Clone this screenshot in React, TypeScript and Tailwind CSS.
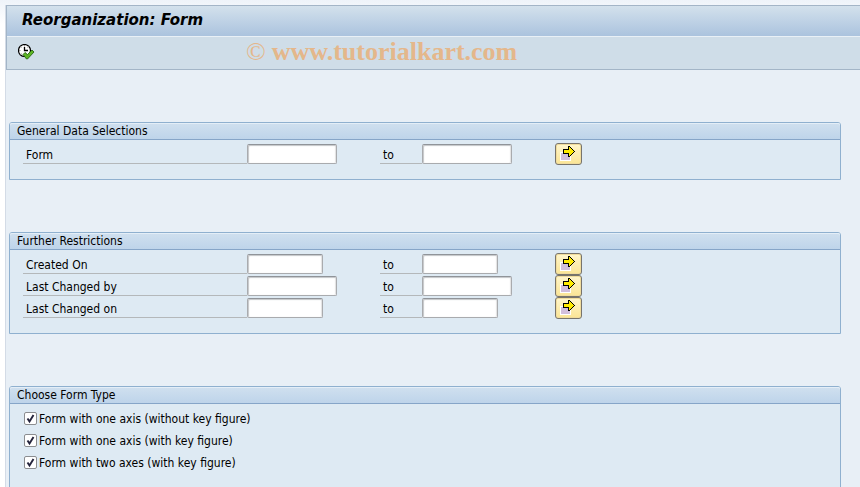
import React from 'react';

interface RangeField {
  id: string;
  label: string;
  wide?: boolean;
}

const GENERAL_FIELDS: RangeField[] = [{ id: 'form', label: 'Form', wide: true }];

const RESTRICTION_FIELDS: RangeField[] = [
  { id: 'created-on', label: 'Created On' },
  { id: 'changed-by', label: 'Last Changed by', wide: true },
  { id: 'changed-on', label: 'Last Changed on' },
];

const FORM_TYPES = [
  { id: 'one-axis', label: 'Form with one axis (without key figure)' },
  { id: 'one-axis-key', label: 'Form with one axis (with key figure)' },
  { id: 'two-axes-key', label: 'Form with two axes (with key figure)' },
];

const ExecuteIcon = () => (
  <svg width="17" height="17" viewBox="0 0 17 17" aria-hidden="true">
    <circle cx="6.5" cy="6.5" r="6" fill="#fff" stroke="#000" strokeWidth="1.2" />
    <path
      d="M6.5 1v1.5M6.5 10.5V12M1 6.5h1.5M2.5 2.5l1 1M10.5 2.5l-1 1M2.5 10.5l1-1"
      stroke="#999"
      fill="none"
    />
    <path d="M6.5 3v3.5h3.5" stroke="#000" strokeWidth="1.3" fill="none" />
    <path
      d="M5 10.5l2-2 2.5 2L14 6l2 2-6.5 7H8.5z"
      fill="#5cb424"
      stroke="#1d5a08"
      strokeWidth="0.8"
    />
  </svg>
);

const MultipleIcon = () => (
  <svg width="16" height="16" viewBox="0 0 16 16" aria-hidden="true" shapeRendering="crispEdges">
    <rect x="0" y="6" width="11" height="9" fill="#fff" />
    <rect x="1" y="7" width="9" height="7" fill="#d2bfdc" />
    <path
      d="M3.5 3.5h5v-3h1l5 5-5 5h-1v-3h-5z"
      fill="#ffeb00"
      stroke="#000"
    />
  </svg>
);

const CheckMark = () => (
  <svg
    className="pointer-events-none col-start-1 row-start-1 opacity-0 peer-checked:opacity-100"
    width="13"
    height="13"
    viewBox="0 0 13 13"
    aria-hidden="true"
  >
    <path d="M3.5 6.5L5.5 9.5 9.5 3" fill="none" stroke="#24243c" strokeWidth="1.9" />
  </svg>
);

const TextBox = ({ id, wide }: { id: string; wide?: boolean }) => (
  <input
    id={id}
    type="text"
    className={`${wide ? 'w-[90px]' : 'w-[76px]'} block h-5 rounded-[2px] border border-[#a9abae] border-t-[#909499] bg-white px-1 shadow-[inset_1px_1px_1px_#c4c6c8,inset_-1px_0_1px_#e2e2e2] outline-none`}
  />
);

const RangeRow = ({ id, label, wide }: RangeField) => (
  <div className="flex h-[22px] items-center">
    <label htmlFor={`${id}-from`} className="h-5 w-[224px] border-b border-[#b4b8ba] pl-[3px] leading-[23px]">
      {label}
    </label>
    <div className="w-[133px]">
      <TextBox id={`${id}-from`} wide={wide} />
    </div>
    <label htmlFor={`${id}-to`} className="h-5 w-[42px] border-b border-[#b4b8ba] pl-[3px] leading-[23px]">
      to
    </label>
    <div className="w-[133px]">
      <TextBox id={`${id}-to`} wide={wide} />
    </div>
    <button
      type="button"
      aria-label={`Multiple selection: ${label}`}
      className="flex h-[22px] w-[27px] items-center rounded-[3px] border border-[#77746c] bg-linear-to-b from-[#fff6cc] to-[#fbe594] pl-1 shadow-[inset_0_0_0_1px_#f0dc9c]"
    >
      <MultipleIcon />
    </button>
  </div>
);

const Group = ({ title, children }: { title: string; children: React.ReactNode }) => (
  <section className="rounded-t-[3px] border border-[#8fb0cf] bg-[#deeaf3]">
    <h2 className="h-[17px] rounded-t-[2px] border-b border-[#86a5c8] bg-linear-to-b from-[#d0e0ef] to-[#bed4ea] pl-[7px] leading-4 shadow-[inset_0_1px_0_#e4eef7]">
      {title}
    </h2>
    {children}
  </section>
);

const App: React.FC = () => {
  return (
    <div className="h-screen overflow-hidden bg-linear-to-b from-[#eef3f9] to-white to-5% pl-[5px] pt-[5px] font-['DejaVu_Sans_Condensed','DejaVu_Sans',sans-serif] text-[12px] text-black">
      <div className="min-h-full border-l border-[#d3dbe6] bg-[#e8eff6]">
        <header className="border-y border-l border-[#a3b5c7]">
          <h1 className="h-[30px] bg-linear-to-b from-[#d3e1ec] to-[#abc3de] pl-[15px] font-['DejaVu_Sans',sans-serif] text-[15px] leading-7 font-bold italic">
            Reorganization: Form
          </h1>
          <div className="flex h-[33px] items-center border-t border-[#e9f0f6] bg-[#cfdde8] pl-[11px]">
            <button type="button" aria-label="Execute" className="mb-0.5">
              <ExecuteIcon />
            </button>
            <p className="mb-0.5 ml-[211px] flex gap-1.5 font-['Liberation_Serif',serif] text-[26px] leading-7 text-[#e4b78b]">
              <span>©</span>
              <span className="font-bold">www.tutorialkart.com</span>
            </p>
          </div>
        </header>

        <main className="flex flex-col gap-[52px] pt-[52px] pr-[19px] pl-[3px]">
          <Group title="General Data Selections">
            <div className="pt-[3px] pb-3.5 pl-[13px]">
              {GENERAL_FIELDS.map((field) => (
                <RangeRow key={field.id} {...field} />
              ))}
            </div>
          </Group>

          <Group title="Further Restrictions">
            <div className="pt-[3px] pb-3.5 pl-[13px]">
              {RESTRICTION_FIELDS.map((field) => (
                <RangeRow key={field.id} {...field} />
              ))}
            </div>
          </Group>

          <Group title="Choose Form Type">
            <div className="flex flex-col gap-[9px] pt-2 pb-8 pl-3.5">
              {FORM_TYPES.map((type) => (
                <label key={type.id} htmlFor={type.id} className="flex h-[13px] items-start gap-0.5 leading-[15px]">
                  <span className="grid">
                    <input
                      id={type.id}
                      type="checkbox"
                      defaultChecked
                      className="peer col-start-1 row-start-1 size-[13px] appearance-none rounded-[2px] border border-[#8b8d90] bg-white"
                    />
                    <CheckMark />
                  </span>
                  {type.label}
                </label>
              ))}
            </div>
          </Group>
        </main>
      </div>
    </div>
  );
};

export default App;
